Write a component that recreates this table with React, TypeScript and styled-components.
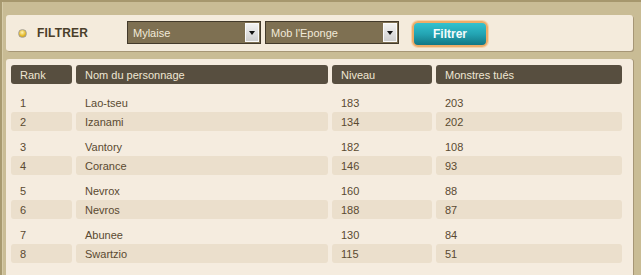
import React from 'react';
import styled, { createGlobalStyle } from 'styled-components';

const GlobalStyle = createGlobalStyle`
  html, body {
    margin: 0;
    padding: 0;
  }
  body {
    font-family: "Liberation Sans", Arial, sans-serif;
    font-size: 11px;
  }
`;

type Ranking = {
  rank: number,
  name: string,
  level: number,
  kills: number
};

const rankings: Ranking[] = [
  { rank: 1, name: 'Lao-tseu', level: 183, kills: 203 },
  { rank: 2, name: 'Izanami', level: 134, kills: 202 },
  { rank: 3, name: 'Vantory', level: 182, kills: 108 },
  { rank: 4, name: 'Corance', level: 146, kills: 93 },
  { rank: 5, name: 'Nevrox', level: 160, kills: 88 },
  { rank: 6, name: 'Nevros', level: 188, kills: 87 },
  { rank: 7, name: 'Abunee', level: 130, kills: 84 },
  { rank: 8, name: 'Swartzio', level: 115, kills: 51 },
  { rank: 9, name: 'Kalista', level: 155, kills: 51 },
];

const Page = styled.div`
  height: 275px;
  overflow: hidden;
  box-sizing: border-box;
  background: #c9bc95;
  border-top: 2px solid #a6976d;
  padding: 13px 8px 0 6px;
  box-shadow: inset 2px 0 0 #a89a70, inset 3px 0 0 #d6cba8;
`;

const FilterBar = styled.div`
  display: flex;
  align-items: center;
  height: 36px;
  background: #f4ebdc;
  border-radius: 3px;
  box-shadow: 1px 1px 0 #a69676;
  padding-left: 12px;
`;

const Bullet = styled.span`
  width: 7px;
  height: 7px;
  border-radius: 50%;
  border: 1px solid #a9a394;
  background: radial-gradient(circle at 45% 35%, #fff4b8 0%, #e6bb2c 55%, #b38614 100%);
  flex: none;
`;

const Title = styled.span`
  margin-left: 10px;
  width: 90px;
  font-family: "Liberation Sans", Arial, sans-serif;
  font-weight: bold;
  font-size: 12px;
  color: #4a3e2a;
  letter-spacing: 0.2px;
`;

const Select = styled.div`
  position: relative;
  display: flex;
  align-items: center;
  box-sizing: border-box;
  width: 134px;
  height: 23px;
  margin-right: 4px;
  margin-top: -1px;
  padding-left: 5px;
  background: #7e7052;
  border: 1px solid #433a2b;
  color: #f2ead8;
  font-size: 11px;
`;

const SelectArrow = styled.span`
  position: absolute;
  right: 1px;
  top: 1px;
  bottom: 1px;
  width: 14px;
  box-sizing: border-box;
  border: 1px solid #fafafa;
  background: linear-gradient(#f2f2f2, #cfcfcf);
  display: flex;
  align-items: center;
  justify-content: center;

  &::after {
    content: '';
    border-left: 3.5px solid transparent;
    border-right: 3.5px solid transparent;
    border-top: 4px solid #111;
  }
`;

const FilterButton = styled.button`
  margin-left: 9px;
  margin-top: 2px;
  width: 76px;
  height: 26px;
  box-sizing: border-box;
  border-radius: 6px;
  border: 2px solid #eeac68;
  box-shadow: 0 0 0 1px #f6d2a8;
  background: linear-gradient(#33c2cf 0%, #23a4b3 50%, #137784 100%);
  color: #f4fbfb;
  font-family: "Liberation Sans", Arial, sans-serif;
  font-weight: bold;
  font-size: 12px;
  padding: 0;
  cursor: pointer;
`;

const TablePanel = styled.div`
  display: flex;
  flex-direction: column;
  margin-top: 8px;
  background: #f5ecdf;
  border-radius: 3px;
  box-shadow: 1px 0 0 #a69676;
  padding: 6px 10px 20px 5px;
`;

const Row = styled.div<{ $gapBefore?: boolean }>`
  display: grid;
  grid-template-columns: 61px 252px 100px 186px;
  column-gap: 4px;
  height: 19px;
  flex: none;
  margin-top: ${p => (p.$gapBefore ? '6px' : '0')};
`;

const HeaderRow = styled(Row)`
  margin-bottom: 3px;
`;

const HeaderCell = styled.div`
  display: flex;
  align-items: center;
  padding-left: 9px;
  background: #574e3f;
  border-radius: 3px;
  color: #efe6d3;
  font-size: 11px;
`;

const Cell = styled.div<{ $shaded?: boolean }>`
  display: flex;
  align-items: center;
  padding-left: 9px;
  background: ${p => (p.$shaded ? '#ebdfcc' : 'transparent')};
  border-radius: 3px;
  color: #5a4a31;
  font-size: 11px;
`;

export default function App() {
  return (
    <>
      <GlobalStyle />
      <Page>
        <FilterBar>
          <Bullet />
          <Title>FILTRER</Title>
          <Select>
            Mylaise
            <SelectArrow />
          </Select>
          <Select>
            Mob l'Eponge
            <SelectArrow />
          </Select>
          <FilterButton>Filtrer</FilterButton>
        </FilterBar>
        <TablePanel>
          <HeaderRow>
            <HeaderCell>Rank</HeaderCell>
            <HeaderCell>Nom du personnage</HeaderCell>
            <HeaderCell>Niveau</HeaderCell>
            <HeaderCell>Monstres tués</HeaderCell>
          </HeaderRow>
          {rankings.map((r, i) => {
            const shaded = i % 2 === 1;
            return (
              <Row key={r.rank} $gapBefore={!shaded}>
                <Cell $shaded={shaded}>{r.rank}</Cell>
                <Cell $shaded={shaded}>{r.name}</Cell>
                <Cell $shaded={shaded}>{r.level}</Cell>
                <Cell $shaded={shaded}>{r.kills}</Cell>
              </Row>
            );
          })}
        </TablePanel>
      </Page>
    </>
  );
}
